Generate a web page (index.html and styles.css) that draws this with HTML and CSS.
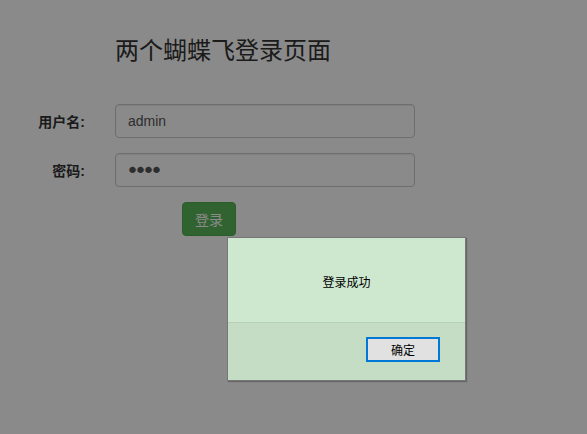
FILE: index.html
```html
<!DOCTYPE html>
<html lang="zh-CN">
<head>
<meta charset="utf-8">
<title>两个蝴蝶飞登录页面</title>
<link rel="stylesheet" href="styles.css">
</head>
<body>
<div class="page">
  <h1 class="title">两个蝴蝶飞登录页面</h1>
  <form class="form">
    <div class="row">
      <label class="label">用户名:</label>
      <input class="input" type="text" value="admin">
    </div>
    <div class="row">
      <label class="label">密码:</label>
      <input class="input input-pass" type="password" value="1234">
    </div>
    <div class="actions">
      <button type="button" class="btn">登录</button>
    </div>
  </form>
</div>
<div class="backdrop"></div>
<div class="dialog">
  <div class="dialog-body">登录成功</div>
  <div class="dialog-foot">
    <button type="button" class="ok">确定</button>
  </div>
</div>
</body>
</html>
```
FILE: styles.css
```css
html, body {
  margin: 0;
  padding: 0;
  background: #fff;
  width: 587px;
  height: 434px;
  overflow: hidden;
}
body {
  font-family: "Liberation Sans", "Noto Sans CJK SC", sans-serif;
  font-size: 14px;
  color: #333;
}
.page {
  padding-top: 38px;
}
.title {
  margin: 0 0 0 115px;
  font-size: 24px;
  font-weight: 400;
  line-height: 26px;
}
.form {
  margin-top: 40px;
  display: flex;
  flex-direction: column;
  gap: 15px;
}
.row {
  display: grid;
  grid-template-columns: 115px 300px;
  align-items: center;
}
.label {
  text-align: right;
  padding-right: 30px;
  font-weight: 700;
  font-size: 14px;
}
.input {
  box-sizing: border-box;
  height: 34px;
  width: 300px;
  padding: 6px 12px;
  border: 1px solid #ccc;
  border-radius: 4px;
  font-family: "Liberation Sans", sans-serif;
  font-size: 14px;
  color: #555;
  background: #fff;
  box-shadow: inset 0 1px 1px rgba(0,0,0,.075);
  outline: none;
}
.input-pass {
  font-family: "DejaVu Sans", sans-serif;
  font-size: 22px;
  letter-spacing: -5px;
  padding: 0 0 0 10px;
}
.actions {
  padding-left: 182px;
}
.btn {
  box-sizing: border-box;
  width: 54px;
  height: 34px;
  padding: 0;
  background: #5cb85c;
  border: 1px solid #4cae4c;
  border-radius: 4px;
  color: #fff;
  font-family: "Liberation Sans", "Noto Sans CJK SC", sans-serif;
  font-size: 14px;
}
.backdrop {
  position: absolute;
  inset: 0;
  background: rgba(0,0,0,.46);
}
.dialog {
  position: absolute;
  left: 227px;
  top: 237px;
  width: 237px;
  height: 142px;
  border: 1px solid #777;
  background: #c4ddc4;
  box-shadow: 1px 1px 1px rgba(0,0,0,.25);
  font-family: "Noto Sans CJK SC", sans-serif;
  font-size: 12px;
  color: #000;
  display: flex;
  flex-direction: column;
}
.dialog-body {
  height: 85px;
  background: #cde8cf;
  border-bottom: 1px solid #b6cfb7;
  display: flex;
  align-items: center;
  justify-content: center;
  padding-top: 2px;
  box-sizing: border-box;
}
.dialog-foot {
  flex: 1;
  display: flex;
  justify-content: flex-end;
  align-items: flex-start;
  padding: 14px 25px 0 0;
}
.ok {
  box-sizing: border-box;
  width: 74px;
  height: 25px;
  padding: 0;
  background: #e1e1e1;
  border: 2px solid #0078d7;
  font-family: "Noto Sans CJK SC", sans-serif;
  font-size: 12px;
  color: #000;
}
```
